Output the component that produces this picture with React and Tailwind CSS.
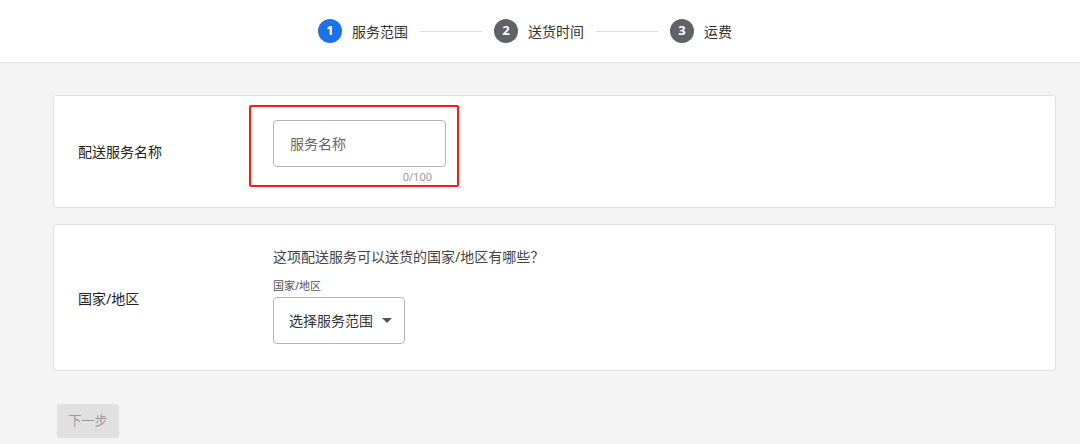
export default function App() {
  const font = { fontFamily: '"Noto Sans", "Noto Sans CJK SC", sans-serif' };
  return (
    <div className="w-[1080px] h-[444px] bg-[#f4f4f4] overflow-hidden" style={font}>
      <div className="h-[63px] bg-white border-b border-[#e3e3e3] flex items-center justify-center gap-[10px] pr-[30px]">
        <span className="w-6 h-6 rounded-full bg-[#1a73e8] text-white text-[13px] font-bold flex items-center justify-center">1</span>
        <span className="text-[14px] text-[#333]">服务范围</span>
        <span className="w-[62px] h-px bg-[#ddd] mx-[2px]" />
        <span className="w-6 h-6 rounded-full bg-[#5f6368] text-white text-[13px] font-bold flex items-center justify-center">2</span>
        <span className="text-[14px] text-[#333]">送货时间</span>
        <span className="w-[62px] h-px bg-[#ddd] mx-[2px]" />
        <span className="w-6 h-6 rounded-full bg-[#5f6368] text-white text-[13px] font-bold flex items-center justify-center">3</span>
        <span className="text-[14px] text-[#333]">运费</span>
      </div>
      <div className="ml-[53px] w-[1003px] mt-[32px] flex flex-col gap-[16px]">
        <div className="h-[113px] bg-white border border-[#e0e0e0] rounded-[3px] flex items-center">
          <div className="w-[219px] pl-[24px] text-[14px] text-[#222]">配送服务名称</div>
          <div className="relative -mt-[16px]">
            <div className="w-[173px] h-[47px] border border-[#b5b5b5] rounded-[4px] flex items-center px-[16px] text-[14px] text-[#666]">服务名称</div>
            <div className="text-[11px] text-[#999] text-right pr-[14px] mt-[2px] -mb-[18px]">0/100</div>
            <div className="absolute -left-[24px] -top-[15px] w-[210px] h-[82px] border-2 border-[#ff1a1a] rounded-[2px]" />
          </div>
        </div>
        <div className="h-[147px] bg-white border border-[#e0e0e0] rounded-[3px] flex items-center">
          <div className="w-[219px] pl-[24px] text-[14px] text-[#222] mt-[2px]">国家/地区</div>
          <div className="flex flex-col -mt-[4px]">
            <div className="text-[14px] text-[#444] leading-[20px]">这项配送服务可以送货的国家/地区有哪些？</div>
            <div className="text-[11px] text-[#555] mt-[12px] leading-[14px]">国家/地区</div>
            <div className="mt-[4px] w-[132px] h-[47px] border border-[#b5b5b5] rounded-[4px] flex items-center pl-[15px] gap-[9px] text-[14px] text-[#333]">
              选择服务范围
              <svg width="10" height="6" viewBox="0 0 10 6"><path d="M0 0h10L5 5z" fill="#555" /></svg>
            </div>
          </div>
        </div>
        <div className="mt-[17px] ml-[4px] w-[62px] h-[34px] bg-[#e0e0e0] rounded-[3px] text-[13px] text-[#999] flex items-center justify-center">下一步</div>
      </div>
    </div>
  );
}
